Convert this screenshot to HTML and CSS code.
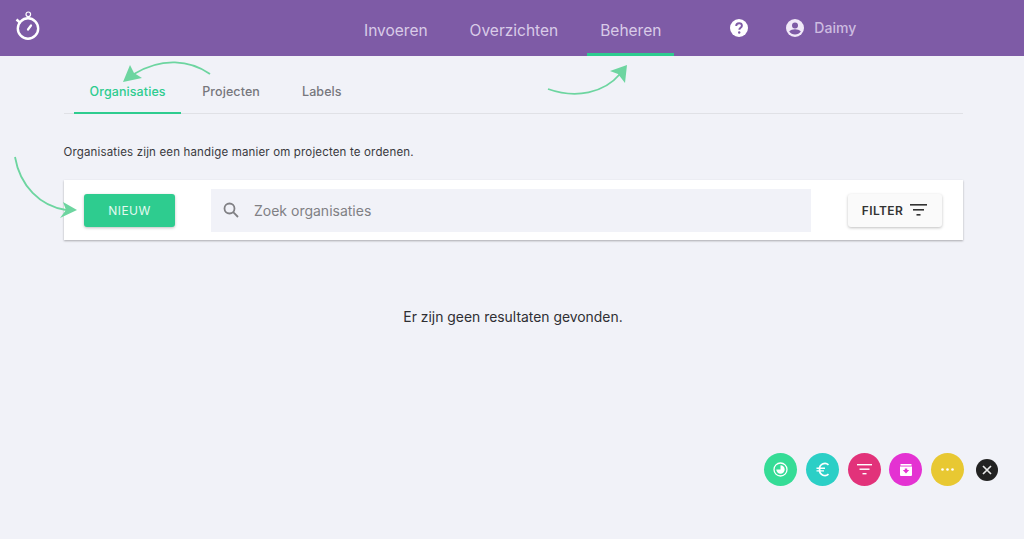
FILE: index.html
```html
<!DOCTYPE html>
<html lang="nl">
<head>
<meta charset="utf-8">
<title>Organisaties</title>
<link rel="stylesheet" href="styles.css">
</head>
<body>
<header class="topbar">
  <svg class="logo" width="26" height="30" viewBox="0 0 26 30" fill="none" stroke="#fff">
    <circle cx="13" cy="18.500" r="10.200" stroke-width="2.400"/>
    <path d="M13 19.500 16 15.500" stroke-width="2.200" stroke-linecap="round"/>
    <path d="M1.500 9.500 5.500 13" stroke-width="2.400"/>
    <circle cx="13.300" cy="4.300" r="2.300" stroke-width="1.200"/>
    <path d="M13.300 6.500v2" stroke-width="2.400"/>
  </svg>
  <nav class="mainnav">
    <a class="mainnav-item">Invoeren</a>
    <a class="mainnav-item">Overzichten</a>
    <a class="mainnav-item is-active">Beheren</a>
  </nav>
  <div class="usermenu">
    <svg class="help" width="20" height="20" viewBox="0 0 20 20">
      <circle cx="10" cy="10" r="9" fill="#fff"/>
      <path d="M7.200 8c0-1.700 1.200-2.700 2.900-2.700s2.800 1 2.800 2.400c0 2-2.600 2.100-2.600 4" fill="none" stroke="#7e5ba6" stroke-width="1.900"/>
      <circle cx="10.200" cy="14.500" r="1.200" fill="#7e5ba6"/>
    </svg>
    <div class="user">
      <svg width="20" height="20" viewBox="0 0 20 20">
        <circle cx="10" cy="10" r="9" fill="#f1e9f8"/>
        <circle cx="10" cy="7.600" r="3" fill="#7e5ba6"/>
        <path d="M4.200 13.600c1.300-1.700 3.600-2.400 5.800-2.400s4.500.7 5.800 2.400c-1.300 1.900-3.400 3-5.800 3s-4.500-1.100-5.800-3z" fill="#7e5ba6"/>
      </svg>
      <span>Daimy</span>
    </div>
  </div>
</header>

<main class="content">
  <div class="tabs">
    <a class="tab is-active">Organisaties</a>
    <a class="tab">Projecten</a>
    <a class="tab">Labels</a>
  </div>
  <p class="intro">Organisaties zijn een handige manier om projecten te ordenen.</p>
  <section class="toolbar">
    <button class="btn-new">NIEUW</button>
    <div class="search">
      <svg width="20" height="20" viewBox="0 0 20 20" fill="none" stroke="#808084" stroke-width="1.800">
        <circle cx="8.500" cy="8.500" r="5"/>
        <path d="M12.200 12.200 17 17"/>
      </svg>
      <span>Zoek organisaties</span>
    </div>
    <button class="btn-filter">FILTER
      <svg width="17" height="12" viewBox="0 0 17 12" fill="#333">
        <rect x="0" y="0" width="17" height="1.600"/>
        <rect x="3" y="5" width="11" height="1.600"/>
        <rect x="6.500" y="10" width="4" height="1.600"/>
      </svg>
    </button>
  </section>
  <p class="empty">Er zijn geen resultaten gevonden.</p>
</main>

<div class="dock">
  <span class="dock-btn c-green">
    <svg width="17" height="17" viewBox="0 0 17 17" fill="none" stroke="#fff">
      <circle cx="8.500" cy="8.500" r="6.500" stroke-width="1.300"/>
      <path d="M8.500 4.300A4.200 4.200 0 1 1 4.300 8.500H8.500z" fill="#fff" stroke="none"/>
    </svg>
  </span>
  <span class="dock-btn c-teal">
    <svg width="17" height="17" viewBox="0 0 17 17" fill="none" stroke="#fff" stroke-width="1.700">
      <path d="M14.500 3.800A5.400 5.400 0 0 0 5.600 8.500 5.400 5.400 0 0 0 14.500 13.200"/>
      <path d="M2.500 7.200h8.500M2.500 9.900h7.500" stroke-width="1.400"/>
    </svg>
  </span>
  <span class="dock-btn c-pink">
    <svg width="15" height="11" viewBox="0 0 15 11" fill="#fff">
      <rect width="15" height="1.400"/>
      <rect x="2.500" y="4.500" width="10" height="1.400"/>
      <rect x="5.500" y="9" width="4" height="1.400"/>
    </svg>
  </span>
  <span class="dock-btn c-magenta">
    <svg width="14" height="14" viewBox="0 0 14 14">
      <path d="M1 3.500h12V12a1 1 0 0 1-1 1H2a1 1 0 0 1-1-1z" fill="#fff"/>
      <rect x="1.500" y="1" width="11" height="1.600" fill="#fff"/>
      <path d="M7 10.500 3.800 7h2V5.500h2.400V7h2z" fill="#e432d2"/>
    </svg>
  </span>
  <span class="dock-btn c-yellow">
    <svg width="13" height="3" viewBox="0 0 13 3" fill="#fff">
      <circle cx="1.500" cy="1.500" r="1.300"/>
      <circle cx="6.500" cy="1.500" r="1.300"/>
      <circle cx="11.500" cy="1.500" r="1.300"/>
    </svg>
  </span>
  <span class="dock-close">
    <svg width="10" height="10" viewBox="0 0 10 10" stroke="#e8e8e8" stroke-width="1.700">
      <path d="M1 1 9 9M9 1 1 9"/>
    </svg>
  </span>
</div>

<svg class="arrow arrow-tab" width="100" height="30" viewBox="0 0 100 30" fill="none">
  <path d="M90 16C70 2 42 -1 14 16" stroke="#6dd5a0" stroke-width="1.800"/>
  <path d="M3 24 10 7 14 15 22 20z" fill="#6dd5a0"/>
</svg>
<svg class="arrow arrow-nav" width="90" height="36" viewBox="0 0 90 36" fill="none">
  <path d="M2 26C30 36 58 30 74 11" stroke="#6dd5a0" stroke-width="1.800"/>
  <path d="M81 2 79 20 72 11 64 8z" fill="#6dd5a0"/>
</svg>
<svg class="arrow arrow-new" width="70" height="70" viewBox="0 0 70 70" fill="none">
  <path d="M1 1C6 30 26 50 52 54" stroke="#6dd5a0" stroke-width="1.800"/>
  <path d="M63 54 46 62 52 54 49 46z" fill="#6dd5a0"/>
</svg>
</body>
</html>
```

FILE: styles.css
```css
* { box-sizing: border-box; }

html, body { height: 100%; }

body {
  margin: 0;
  background: #f1f2f8;
  color: #2f2f33;
  font-family: "Inter", "Liberation Sans", sans-serif;
  overflow: hidden;
  position: relative;
}

.topbar {
  height: 56px;
  background: #7e5ba6;
  display: flex;
  align-items: stretch;
  padding-left: 15px;
}

.logo { margin-top: 10px; flex: none; }

.mainnav {
  display: flex;
  margin-left: 310px;
}

.mainnav-item {
  padding: 22px 13px 0;
  margin-right: 16px;
  font-size: 15.5px;
  line-height: 18px;
  color: #d9cbe8;
  border-bottom: 3px solid transparent;
}

.mainnav-item.is-active { border-bottom-color: #2ecc8f; }

.usermenu {
  display: flex;
  align-items: flex-start;
  gap: 36px;
  margin-left: 39px;
  padding-top: 18px;
}

.user {
  display: flex;
  align-items: center;
  gap: 9px;
  font-size: 14px;
  line-height: 20px;
  font-weight: 500;
  color: #cdbbe0;
}

.content { padding: 0 61.5px 0 63.5px; }

.tabs {
  display: flex;
  height: 58px;
  padding: 28px 0 0 10.5px;
  border-bottom: 1px solid #e0e1e6;
}

.tab {
  height: 30px;
  padding: 0 21px;
  font-size: 12.5px;
  line-height: 16px;
  font-weight: 500;
  letter-spacing: 0.1px;
  color: #77777d;
}

.tab.is-active {
  padding: 0 15.500px;
  color: #2ecc8f;
  border-bottom: 2px solid #2ecc8f;
}

.intro {
  margin: 30px 0 0;
  font-size: 11.5px;
  line-height: 16px;
  letter-spacing: 0.16px;
  color: #3a3a3e;
}

.toolbar {
  margin-top: 20px;
  height: 60px;
  background: #fff;
  display: flex;
  align-items: center;
  padding: 0 21px 0 20.500px;
  box-shadow: 0 1px 2px rgba(0, 0, 0, 0.3);
}

.btn-new {
  width: 91px;
  height: 33px;
  flex: none;
  border: 0;
  border-radius: 3px;
  background: #2ecc8f;
  color: #e3f9ef;
  font: 400 12px "Inter", "Liberation Sans", sans-serif;
  letter-spacing: 0.5px;
  box-shadow: 0 1px 3px rgba(0, 0, 0, 0.25);
}

.search {
  width: 600px;
  height: 43px;
  margin-left: 36px;
  flex: none;
  background: #f1f2f8;
  display: flex;
  align-items: center;
  gap: 13px;
  padding-left: 10px;
  font-size: 14px;
  color: #808084;
}

.btn-filter {
  width: 94px;
  height: 33px;
  margin-left: auto;
  flex: none;
  border: 0;
  border-radius: 3px;
  background: #fafafa;
  color: #333;
  font: 600 12px "Inter", "Liberation Sans", sans-serif;
  letter-spacing: 0.4px;
  display: flex;
  align-items: center;
  justify-content: center;
  gap: 7px;
  box-shadow: 0 1px 3px rgba(0, 0, 0, 0.25);
}

.empty {
  margin: 67px 0 0;
  text-align: center;
  font-size: 13.9px;
  line-height: 20px;
  color: #2f2f33;
}

.dock {
  position: absolute;
  left: 764px;
  top: 453px;
  display: flex;
  align-items: center;
  gap: 8.75px;
}

.dock-btn {
  width: 33px;
  height: 33px;
  border-radius: 50%;
  display: flex;
  align-items: center;
  justify-content: center;
}

.c-green { background: #35dc96; }
.c-teal { background: #2bcfc6; }
.c-pink { background: #e2327a; }
.c-magenta { background: #e432d2; }
.c-yellow { background: #e8c832; }

.dock-close {
  width: 22px;
  height: 22px;
  margin-left: 3px;
  border-radius: 50%;
  background: #222;
  display: flex;
  align-items: center;
  justify-content: center;
}

.arrow { position: absolute; }
.arrow-tab { left: 120px; top: 58px; }
.arrow-nav { left: 546px; top: 63px; }
.arrow-new { left: 14px; top: 156px; }
```
